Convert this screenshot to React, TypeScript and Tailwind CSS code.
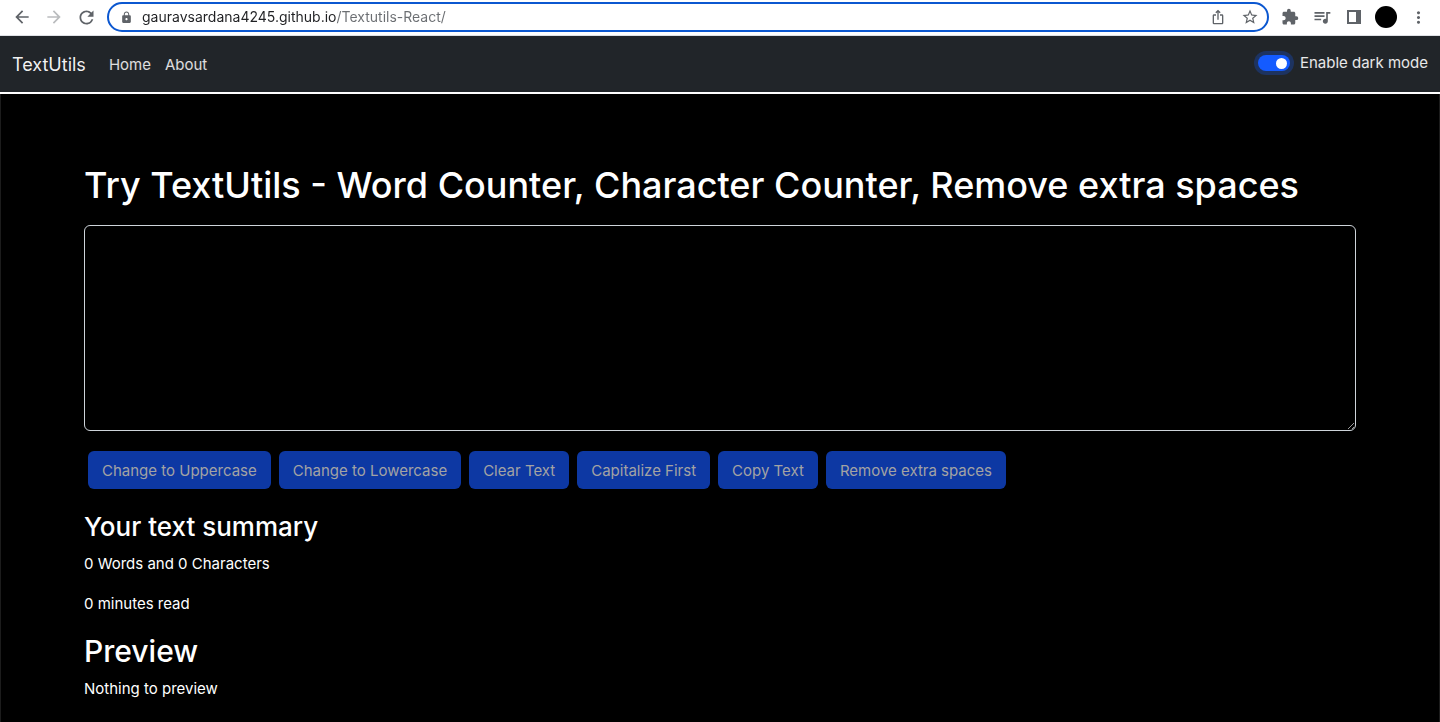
import { useState } from "react";
import {
  MdArrowBack,
  MdArrowForward,
  MdExtension,
  MdIosShare,
  MdLock,
  MdMoreVert,
  MdQueueMusic,
  MdRefresh,
  MdStarBorder,
} from "react-icons/md";

function SidePanelIcon() {
  return (
    <svg width="14" height="14" viewBox="0 0 14 14" fill="currentColor" aria-hidden="true">
      <path fillRule="evenodd" d="M0 0h14v14H0zM2 2v10h7V2z" />
    </svg>
  );
}

function BrowserBar() {
  const [url, setUrl] = useState("gauravsardana4245.github.io/Textutils-React/");
  return (
    <div className="flex h-9 items-center border-b border-[#dfe1e5] bg-white px-3 pb-px text-[#5f6368]">
      <div className="flex items-center gap-3 pr-[11px]">
        <button type="button" aria-label="Back" className="flex size-5 items-center justify-center">
          <MdArrowBack size={20} className="shrink-0" />
        </button>
        <button type="button" aria-label="Forward" className="flex size-5 items-center justify-center text-[#babcbe]">
          <MdArrowForward size={20} className="shrink-0" />
        </button>
        <button type="button" aria-label="Reload" className="flex size-5 items-center justify-center">
          <MdRefresh size={21} className="shrink-0" />
        </button>
      </div>
      <div className="flex h-[30px] min-w-0 flex-1 items-center rounded-full border-2 border-[#0b57d0] pr-[7px] pl-[11px]">
        <MdLock size={13} className="mr-[9px] shrink-0" />
        <input
          type="text"
          aria-label="Address"
          value={url}
          onChange={(e) => setUrl(e.target.value)}
          className="min-w-0 flex-1 bg-[linear-gradient(90deg,#202124_194px,#6b6e72_194px)] bg-clip-text text-sm text-transparent caret-black outline-none"
        />
        <div className="flex items-center gap-3">
          <button type="button" aria-label="Share" className="flex size-5 items-center justify-center">
            <MdIosShare size={16} />
          </button>
          <button type="button" aria-label="Bookmark" className="flex size-5 items-center justify-center">
            <MdStarBorder size={18} />
          </button>
        </div>
      </div>
      <div className="flex items-center gap-3 pl-[11px]">
        <button type="button" aria-label="Extensions" className="flex size-5 items-center justify-center">
          <MdExtension size={18} />
        </button>
        <button type="button" aria-label="Media" className="flex size-5 items-center justify-center">
          <MdQueueMusic size={20} />
        </button>
        <button type="button" aria-label="Side panel" className="flex size-5 items-center justify-center">
          <SidePanelIcon />
        </button>
        <button type="button" aria-label="Profile" className="flex size-5 items-center justify-center">
          <span className="size-[22px] shrink-0 rounded-full bg-black" />
        </button>
        <button type="button" aria-label="Menu" className="flex size-5 items-center justify-center">
          <MdMoreVert size={19} />
        </button>
      </div>
    </div>
  );
}

const actions = [
  "Change to Uppercase",
  "Change to Lowercase",
  "Clear Text",
  "Capitalize First",
  "Copy Text",
  "Remove extra spaces",
];

export default function App() {
  const [text, setText] = useState("");
  const [dark, setDark] = useState(true);
  const words = text.split(/\s+/).filter(Boolean).length;

  const run = (name: string) => {
    if (name === "Change to Uppercase") setText(text.toUpperCase());
    if (name === "Change to Lowercase") setText(text.toLowerCase());
    if (name === "Clear Text") setText("");
    if (name === "Capitalize First") setText(text.replace(/\b\w/g, (c) => c.toUpperCase()));
    if (name === "Copy Text") navigator.clipboard.writeText(text);
    if (name === "Remove extra spaces") setText(text.split(/\s+/).join(" "));
  };

  return (
    <div className="flex min-h-screen flex-col bg-black font-['Inter','Liberation_Sans',sans-serif] text-[15px] leading-6 text-white">
      <BrowserBar />
      <nav className="flex h-[58px] items-center border-b-2 border-white bg-[#212529] px-3">
        <a href="#" className="mr-4 pt-0.5 text-lg text-white/95">
          TextUtils
        </a>
        <div className="flex pt-0.5">
          <a href="#home" className="px-[7px] text-white/85">
            Home
          </a>
          <a href="#about" className="px-[7px] text-white/85">
            About
          </a>
        </div>
        <label className="ml-auto flex items-center gap-2.5 pb-0.5 text-white/90">
          <input
            type="checkbox"
            role="switch"
            checked={dark}
            onChange={(e) => setDark(e.target.checked)}
            className="peer sr-only"
          />
          <span className="flex h-4 w-8 items-center rounded-full bg-[#6c757d] px-[3px] ring-4 ring-[#1d3360] peer-checked:justify-end peer-checked:bg-[#145bff]">
            <span className="size-[11px] rounded-full bg-white" />
          </span>
          Enable dark mode
        </label>
      </nav>
      <main className={dark ? "flex-1 border-x border-[#1c1c1c] bg-black" : "flex-1 border-x border-[#dddddd] bg-white text-black"}>
        <div className="mx-auto max-w-[1296px] px-3 pt-[67px] pb-5">
          <h1 className="mb-4 text-4xl leading-[48px] font-medium">
            <label htmlFor="source">Try TextUtils - Word Counter, Character Counter, Remove extra spaces</label>
          </h1>
          <textarea
            id="source"
            rows={8}
            value={text}
            onChange={(e) => setText(e.target.value)}
            className="block w-full resize-y rounded-md border border-[#ced4da] bg-transparent px-3 py-1.5 outline-none"
          />
          <div className="mx-1 mt-5 flex flex-wrap gap-2">
            {actions.map((name) => (
              <button
                key={name}
                type="button"
                disabled={text.length === 0}
                onClick={() => run(name)}
                className="rounded-md bg-[#0d6efd] px-3.5 pt-2 pb-1.5 text-white disabled:bg-[#0d38a3] disabled:text-[#a3a3a3]"
              >
                {name}
              </button>
            ))}
          </div>
          <h2 className="mt-5 mb-[7px] text-[26px] leading-9 font-medium">Your text summary</h2>
          <p className="mb-4">
            {words} Words and {text.length} Characters
          </p>
          <p className="mb-4">{Math.round(words * 0.008)} minutes read</p>
          <h2 className="mb-[7px] text-3xl leading-[38px] font-medium">Preview</h2>
          <p>{text || "Nothing to preview"}</p>
        </div>
      </main>
    </div>
  );
}
